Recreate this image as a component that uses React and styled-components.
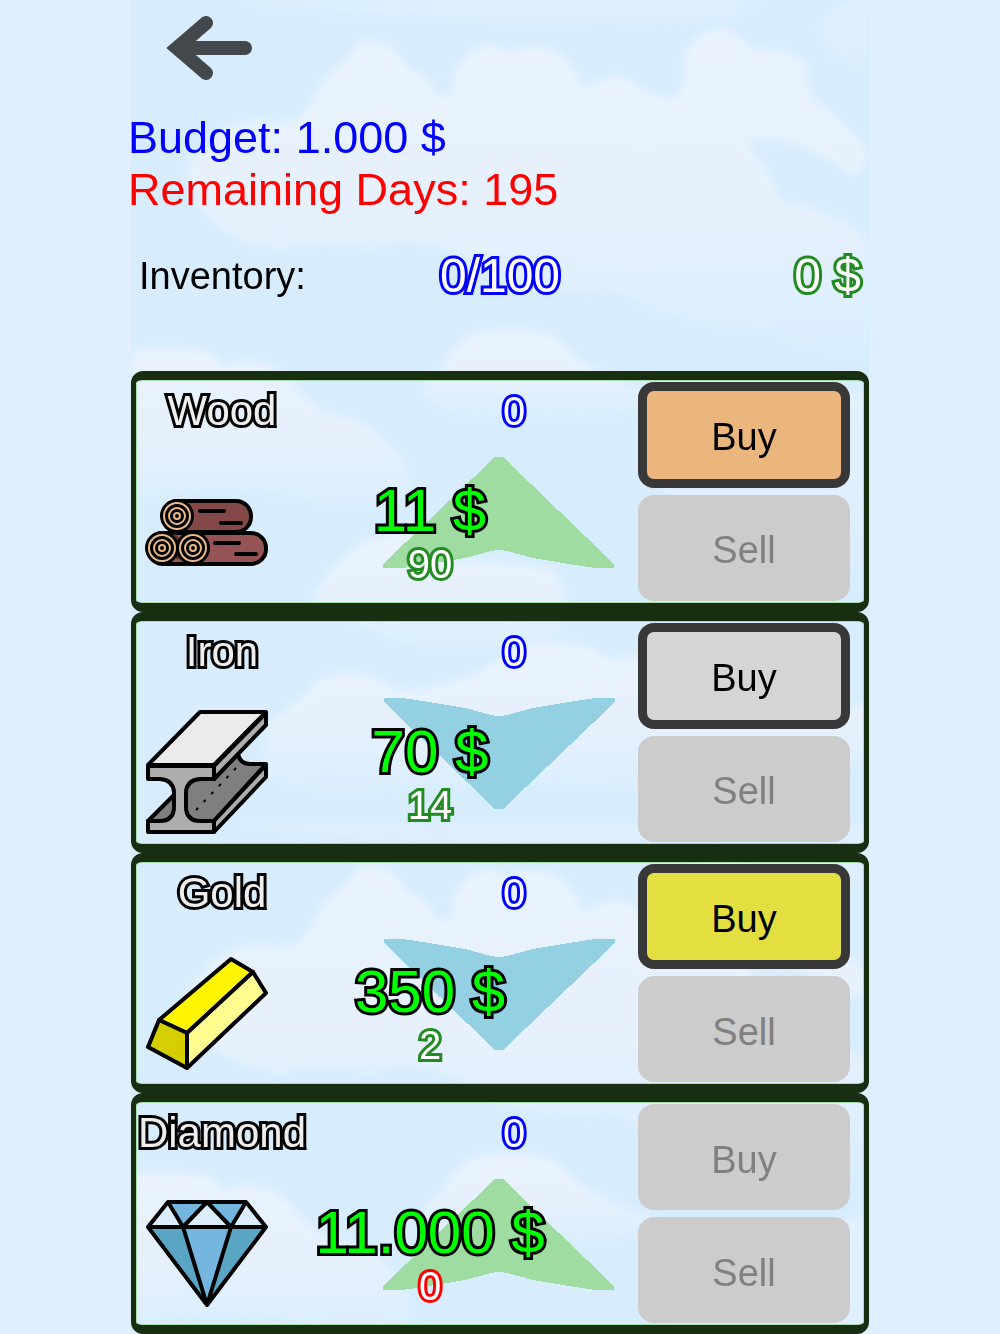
import React, { useState } from 'react'
import styled, { createGlobalStyle } from 'styled-components';

const goods = [
    {
        name: 'Wood',
        held: 0,
        price: '11 $',
        affordable: 90,
        trend: 'up',
        color: '#ebb57e',
        Icon: WoodIcon
    },
    {
        name: 'Iron',
        held: 0,
        price: '70 $',
        affordable: 14,
        trend: 'down',
        color: '#d5d5d5',
        Icon: IronIcon
    },
    {
        name: 'Gold',
        held: 0,
        price: '350 $',
        affordable: 2,
        trend: 'down',
        color: '#e4df41',
        Icon: GoldIcon
    },
    {
        name: 'Diamond',
        held: 0,
        price: '11.000 $',
        affordable: 0,
        trend: 'up',
        color: '#8fd0ee',
        Icon: DiamondIcon
    }
]

function WoodIcon() {
    const ends = [[31, 45], [16, 77], [47, 77]]
    return (
        <svg viewBox="0 0 122 122" aria-hidden="true">
            <g stroke="#000" strokeWidth="4">
                <rect x="2" y="62" width="118" height="31" rx="15" fill="#955354" />
                <rect x="17" y="30" width="88" height="31" rx="15" fill="#844847" />
            </g>
            <path d="M29 63l6 6v16l-3 4-4-4V69z" fill="#5f2c2f" />
            {ends.map(([x, y]) => (
                <g key={x} fill="none" stroke="#e9b987" strokeWidth="2">
                    <circle cx={x} cy={y} r="17" fill="#000" stroke="none" />
                    <circle cx={x} cy={y} r="13" />
                    <circle cx={x} cy={y} r="8" />
                    <circle cx={x} cy={y} r="3" />
                </g>
            ))}
            <path d="M54 40H78M75 52H95M69 72H93M90 83H110" stroke="#000" strokeWidth="4" strokeLinecap="round" />
        </svg>
    )
}

function IronIcon() {
    return (
        <svg viewBox="0 0 122 122" aria-hidden="true">
            <g stroke="#000" strokeWidth="4" strokeLinejoin="round">
                <path d="M36 67H68L92 42Q94 52 104 52H120L68 109H36Z" fill="#7f7f7f" />
                <path d="M2 109L30 81V109Z" fill="#7f7f7f" />
                <path d="M68 109L120 53V65L68 120Z" fill="#adadad" />
                <path d="M68 54L120 1V13L68 67Z" fill="#adadad" />
                <path d="M2 53L54 0H120L68 53Z" fill="#ebebeb" />
                <path d="M2 54H68V67H54Q41 68 40 80V96Q41 109 54 109H68V120H2V109H14Q27 109 28 96V80Q27 68 14 67H2Z" fill="#adadad" />
            </g>
            <path d="M50 98L91 55" stroke="#000" strokeWidth="2" strokeDasharray="3 8" />
        </svg>
    )
}

function GoldIcon() {
    return (
        <svg viewBox="0 0 122 122" aria-hidden="true">
            <g stroke="#000" strokeWidth="4" strokeLinejoin="round">
                <path d="M13 68L85 7L107 20L41 81Z" fill="#fff500" />
                <path d="M41 81L107 20L120 41L41 116Z" fill="#fffc90" />
                <path d="M13 68L41 81V116L2 95Z" fill="#d6cf00" />
            </g>
        </svg>
    )
}

function DiamondIcon() {
    return (
        <svg viewBox="0 0 122 122" aria-hidden="true">
            <path d="M22 9H100L120 34H2Z" fill="#dceefc" />
            <path d="M22 9H61L37 34ZM61 9H100L85 34ZM37 34H85L61 112Z" fill="#74b6de" />
            <path d="M2 34H37L61 112ZM120 34H85L61 112Z" fill="#5ba5c4" />
            <path
                d="M2 34L22 9H100L120 34L61 112ZM2 34H120M22 9L37 34L61 9L85 34L100 9M37 34L61 112L85 34"
                fill="none"
                stroke="#000"
                strokeWidth="4"
                strokeLinejoin="round"
            />
        </svg>
    )
}

const TrendArrow = ({ trend }) => (
    <Trend viewBox="0 0 232 111" role="img" aria-label={`Price going ${trend}`} $trend={trend}>
        <path d="M112 0H120L231 107V111H212L186 107L150 101L124 94Q116 92 108 94L82 101L46 107L20 111H0V107Z" />
    </Trend>
)

const Sky = () => (
    <SkyArt viewBox="0 0 738 1334" preserveAspectRatio="xMidYMin slice" aria-hidden="true">
        <defs>
            <filter id="soft" x="-10%" y="-10%" width="120%" height="120%">
                <feGaussianBlur stdDeviation="4" />
            </filter>
            <linearGradient id="cloud" x1="0" y1="0" x2="0" y2="1">
                <stop offset="0" stopColor="#e9f3fe" />
                <stop offset="0.6" stopColor="#e5f1fd" />
                <stop offset="1" stopColor="#daeefd" />
            </linearGradient>
            <g id="clouds" fill="url(#cloud)" filter="url(#soft)">
                <path d="M100 0H640L600 18Q500 32 400 24T250 16T100 0Z" opacity="0.5" />
                <path d="M738 0V78Q700 60 690 40T710 0Z" opacity="0.5" />
                <path d="M130 120Q170 130 182 96Q200 66 216 60Q228 34 244 42Q270 46 274 66Q300 76 304 92L318 98Q322 62 340 52Q356 38 376 52Q412 40 432 56Q444 66 452 90Q476 70 502 80Q514 94 540 98Q556 92 553 60Q560 30 592 28Q614 38 624 50Q666 48 676 66Q676 94 690 104Q730 134 738 158L722 178Q700 160 680 152Q656 136 614 142Q640 170 650 200Q738 220 738 250L738 350Q690 360 640 330Q560 330 480 290Q400 300 340 262Q280 230 240 250Q190 236 150 250Q90 240 76 214Q40 170 70 150Q90 120 130 120Z" />
                <path d="M0 352Q30 344 50 350Q90 348 88 366Q130 352 160 380Q176 402 200 414Q240 420 252 438Q290 470 276 500Q230 520 180 500Q90 480 0 500Z" />
                <path d="M306 372Q330 326 370 330Q420 324 440 352Q480 384 540 398Q480 424 400 416Q320 424 300 400Q280 390 306 372Z" />
                <path d="M180 600Q200 560 236 540Q290 520 310 560Q380 560 420 570Q450 600 420 640Q330 660 260 640Q220 620 180 600Z" />
                <path d="M520 470Q600 440 640 420T738 390V560Q660 600 600 560T520 470Z" opacity="0.6" />
                <path d="M140 720Q170 700 186 680Q230 660 262 690Q330 690 380 650Q440 630 480 660Q560 640 600 690T738 700V760Q620 800 500 790T260 790T130 760Z" />
            </g>
        </defs>
        <rect width="738" height="1334" fill="#d7edfd" />
        <use href="#clouds" />
        <use href="#clouds" y="824" />
    </SkyArt>
)

const Good = ({ good, held }) => {
    const { name, price, affordable, trend, color, Icon } = good
    return (
        <Card>
            <TrendArrow trend={trend} />
            <Item>
                <Name>{name}</Name>
                <Icon />
            </Item>
            <Market>
                <Held>{held}</Held>
                <Price>{price}</Price>
                <Affordable $none={affordable === 0}>{affordable}</Affordable>
            </Market>
            <Actions>
                <TradeButton type="button" $color={color} disabled={affordable === 0}>Buy</TradeButton>
                <TradeButton type="button" $color={color} disabled={held === 0}>Sell</TradeButton>
            </Actions>
        </Card>
    )
}

const App = () => {
    const [stock] = useState(goods)
    return (
        <>
            <GlobalStyle />
            <Screen>
                <Sky />
                <Toolbar>
                    <BackButton type="button" aria-label="Back">
                        <svg viewBox="0 0 86 64" aria-hidden="true">
                            <path d="M39 7L10 32L39 57" />
                            <path d="M20 32H78" />
                            <path d="M1 32L28 10V54Z" />
                        </svg>
                    </BackButton>
                </Toolbar>
                <Status>
                    <StatusLine $color="#00f">Budget: 1.000 $</StatusLine>
                    <StatusLine $color="#f00">Remaining Days: 195</StatusLine>
                </Status>
                <Inventory>
                    <span>Inventory:</span>
                    <Total $outline="#00f">0/100</Total>
                    <Total $outline="#228b22">0 $</Total>
                </Inventory>
                <GoodsList>
                    {stock.map((good) => <Good key={good.name} good={good} held={good.held} />)}
                </GoodsList>
            </Screen>
        </>
    )
}

const GlobalStyle = createGlobalStyle`
*{
    box-sizing: border-box;
}
body{
    margin: 0;
    background-color: #dfeffd;
    font-family: "Liberation Sans", Arial, sans-serif;
}
`

const Screen = styled.main`
position: relative;
display: flex;
flex-direction: column;
width: 100%;
max-width: 738px;
min-height: 100vh;
margin: 0 auto;
`

const SkyArt = styled.svg`
position: absolute;
inset: 0;
width: 100%;
height: 100%;
z-index: -1;
`

const Toolbar = styled.header`
height: 112px;
padding: 16px 36px;
`

const BackButton = styled.button`
display: block;
padding: 0;
border: none;
background: none;
cursor: pointer;
svg{
    display: block;
    width: 86px;
    height: 64px;
    fill: none;
    stroke: #42484b;
    stroke-width: 14px;
    stroke-linecap: round;
    path:last-child{
        fill: #42484b;
        stroke-width: 2px;
    }
}
`

const Status = styled.section`
margin-left: -3px;
`

const StatusLine = styled.p`
margin: 0;
font-size: 45px;
line-height: 52px;
color: ${({ $color }) => $color};
`

const Outlined = styled.span`
-webkit-text-stroke: 6px ${({ $outline }) => $outline};
paint-order: stroke fill;
stroke-linejoin: round;
white-space: nowrap;
color: #fff;
`

const Inventory = styled.section`
display: grid;
grid-template-columns: 1fr auto 1fr;
margin: 34px 0 69px;
padding: 0 8px;
font-size: 38px;
line-height: 52px;
`

const Total = styled(Outlined)`
font-size: 48px;
&:last-child{
    text-align: right;
}
`

const GoodsList = styled.ul`
flex: 1;
display: grid;
grid-auto-rows: 1fr;
margin: 0;
padding: 0;
list-style: none;
`

const Card = styled.li`
position: relative;
display: grid;
grid-template-columns: 172px 1fr 212px;
padding-right: 14px;
border: solid #172e10;
border-width: 9px 5px;
border-radius: 12px;
box-shadow: inset 0 0 0 1px #a9dfb0;
`

const Trend = styled.svg`
position: absolute;
top: 77px;
left: 50%;
width: 232px;
height: 111px;
margin-left: -117px;
fill: ${({ $trend }) => $trend === 'up' ? '#9edca1' : '#93d0e2'};
shape-rendering: crispEdges;
transform: ${({ $trend }) => $trend === 'up' ? 'none' : 'rotate(180deg)'};
`

const Item = styled.div`
position: relative;
display: flex;
flex-direction: column;
justify-content: space-between;
padding: 7px 0 10px;
svg{
    width: 122px;
    height: 122px;
    margin-left: 10px;
    overflow: visible;
}
`

const Name = styled(Outlined).attrs({ as: 'h2', $outline: '#000' })`
margin: 0;
font-size: 42px;
font-weight: normal;
line-height: 48px;
text-align: center;
color: #eee;
`

const Market = styled.div`
position: relative;
display: flex;
flex-direction: column;
padding: 7px 0 19px;
text-align: center;
`

const Held = styled(Outlined).attrs({ $outline: '#00f' })`
margin-bottom: auto;
padding-left: 82px;
font-size: 40px;
line-height: 48px;
`

const Price = styled(Outlined).attrs({ as: 'strong', $outline: '#000' })`
padding-right: 86px;
font-size: 60px;
font-weight: normal;
line-height: 60px;
color: #0f0;
`

const Affordable = styled(Outlined).attrs(({ $none }) => ({ $outline: $none ? '#f00' : '#228b22' }))`
margin-top: 3px;
padding-right: 86px;
font-size: 40px;
line-height: 40px;
`

const Actions = styled.div`
position: relative;
display: grid;
grid-auto-rows: 1fr;
gap: 7px;
padding: 2px 0;
`

const TradeButton = styled.button`
padding: 6px 0 0;
border: 9px solid #383838;
border-radius: 16px;
background-color: ${({ $color }) => $color};
font-family: inherit;
font-size: 38px;
color: #000;
cursor: pointer;
&:disabled{
    border-color: #ccc;
    background-color: #ccc;
    color: #808080;
    cursor: default;
}
`

export default App
